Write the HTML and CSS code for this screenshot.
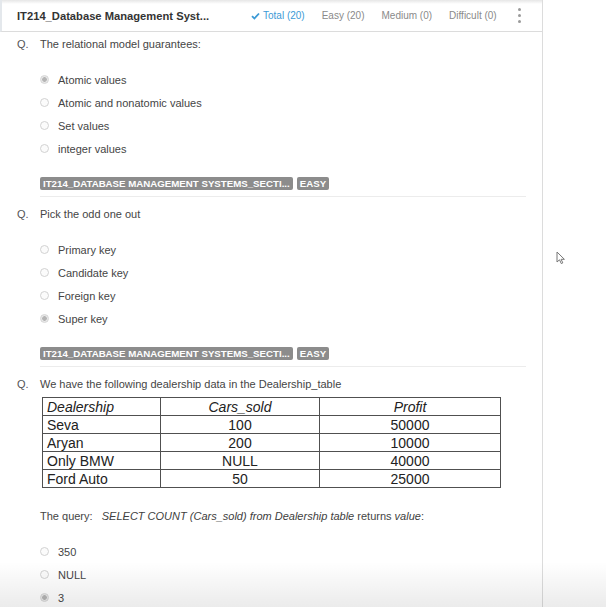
FILE: index.html
```html
<!DOCTYPE html>
<html>
<head>
<meta charset="utf-8">
<link rel="stylesheet" href="styles.css">
</head>
<body>
<div class="app">
  <div class="main">
    <header class="topbar">
      <div class="title">IT214_Database Management Syst...</div>
      <nav class="tabs">
        <span class="tab active"><svg class="check" width="9" height="8" viewBox="0 0 9 8"><polyline points="1,4.2 3.4,6.5 8,1.5" fill="none" stroke="#3b9ad6" stroke-width="1.8"/></svg>Total (20)</span>
        <span class="tab">Easy (20)</span>
        <span class="tab">Medium (0)</span>
        <span class="tab">Difficult (0)</span>
      </nav>
      <div class="kebab"><i></i><i></i><i></i></div>
    </header>

    <section class="question first">
      <div class="q-label">Q.</div>
      <div class="q-body">
        <div class="q-text">The relational model guarantees:</div>
        <ul class="options">
          <li><span class="radio checked"></span>Atomic values</li>
          <li><span class="radio"></span>Atomic and nonatomic values</li>
          <li><span class="radio"></span>Set values</li>
          <li><span class="radio"></span>integer values</li>
        </ul>
        <div class="tags"><span class="tag">IT214_DATABASE MANAGEMENT SYSTEMS_SECTI...</span><span class="tag">EASY</span></div>
      </div>
    </section>

    <section class="question">
      <div class="q-label">Q.</div>
      <div class="q-body">
        <div class="q-text">Pick the odd one out</div>
        <ul class="options">
          <li><span class="radio"></span>Primary key</li>
          <li><span class="radio"></span>Candidate key</li>
          <li><span class="radio"></span>Foreign key</li>
          <li><span class="radio checked"></span>Super key</li>
        </ul>
        <div class="tags"><span class="tag">IT214_DATABASE MANAGEMENT SYSTEMS_SECTI...</span><span class="tag">EASY</span></div>
      </div>
    </section>

    <section class="question last">
      <div class="q-label">Q.</div>
      <div class="q-body">
        <div class="q-text">We have the following dealership data in the Dealership_table</div>
        <table class="data">
          <colgroup><col class="c1"><col class="c2"><col class="c3"></colgroup>
          <tr><th class="left">Dealership</th><th>Cars_sold</th><th>Profit</th></tr>
          <tr><td class="left">Seva</td><td>100</td><td>50000</td></tr>
          <tr><td class="left">Aryan</td><td>200</td><td>10000</td></tr>
          <tr><td class="left">Only BMW</td><td>NULL</td><td>40000</td></tr>
          <tr><td class="left">Ford Auto</td><td>50</td><td>25000</td></tr>
        </table>
        <div class="query">The query:&nbsp;&nbsp; <em>SELECT COUNT (Cars_sold) from Dealership table</em> returns <em>value</em>:</div>
        <ul class="options">
          <li><span class="radio"></span>350</li>
          <li><span class="radio"></span>NULL</li>
          <li><span class="radio checked"></span>3</li>
        </ul>
      </div>
    </section>
  </div>
  <div class="side"></div>
</div>
<svg class="cursor" width="10" height="14" viewBox="0 0 10 14"><path d="M1 1 L1 11 L3.5 8.8 L5.3 12.6 L6.8 11.9 L5.1 8.3 L8.4 8.3 Z" fill="#fff" stroke="#777" stroke-width="1" stroke-linejoin="round"/></svg>
<div class="fade"></div>
</body>
</html>
```

FILE: styles.css
```css
* { box-sizing: border-box; }
html, body { margin: 0; padding: 0; }
body {
  width: 606px;
  height: 607px;
  overflow: hidden;
  background: #fff;
  font-family: "Liberation Sans", Arial, sans-serif;
  color: #454545;
  position: relative;
}
.app { display: flex; height: 607px; }
.main {
  width: 543px;
  border-right: 1px solid #dcdcdc;
  height: 607px;
}
.side { flex: 1; }

.topbar {
  height: 32px;
  border-bottom: 1px solid #dcdcdc;
  display: flex;
  align-items: center;
  padding-left: 15px;
  background: linear-gradient(#e6e6e6 0, #fff 4px);
  border-left: 2px solid #e4e8ec;
}
.title {
  width: 234px;
  font-size: 11.2px;
  font-weight: bold;
  color: #333;
}
.tabs { display: flex; gap: 17px; font-size: 10px; color: #8a8a8a; }
.tab { display: flex; align-items: center; white-space: nowrap; }
.tab.active { color: #3b9ad6; }
.check { margin-right: 3px; }
.kebab {
  margin-left: 21px;
  display: flex;
  flex-direction: column;
  gap: 3px;
}
.kebab i { width: 3px; height: 3px; border-radius: 50%; background: #9a9a9a; display: block; }

.question { display: flex; padding-top: 6px; padding-right: 16px; }
.question.first { padding-top: 1px; }
.q-label { width: 23px; padding-left: 17px; box-sizing: content-box; font-size: 11px; line-height: 23px; color: #555; }
.q-body { flex: 1; border-bottom: 1px solid #ececec; padding-bottom: 6px; }
.question.last .q-body { border-bottom: 0; }
.q-text { font-size: 11px; line-height: 23px; color: #454545; }

.options { list-style: none; margin: 12px 0 0; padding: 0; }
.options li {
  display: flex;
  align-items: center;
  height: 23px;
  font-size: 11px;
  color: #454545;
}
.radio {
  width: 9px; height: 9px;
  border-radius: 50%;
  border: 1px solid #d2d2d2;
  background: #fbfbfb;
  margin-right: 9px;
  flex: none;
}
.radio.checked {
  border-color: #d6d6d6;
  background: radial-gradient(circle, #b5b5b5 0 2px, #e9e9e9 2.6px);
}

.tags { display: flex; gap: 4px; margin-top: 17px; }
.tag {
  height: 13px;
  line-height: 13px;
  padding: 0 3px;
  background: #8c8c8c;
  color: #fff;
  font-size: 9.7px;
  font-weight: bold;
  border-radius: 2px;
  white-space: nowrap;
}

.data {
  margin-top: 1px;
  margin-left: 2px;
  border-collapse: collapse;
  width: 458px;
  table-layout: fixed;
  font-size: 14px;
  color: #222;
}
.data .c1 { width: 118px; }
.data .c2 { width: 159px; }
.data .c3 { width: 181px; }
.data th, .data td {
  border: 1px solid #505050;
  height: 18px;
  padding: 0 4px;
  line-height: 16px;
  text-align: center;
  font-weight: normal;
}
.data th { font-style: italic; }
.data .left { text-align: left; }

.query { margin-top: 17px; font-size: 11px; line-height: 23px; color: #454545; }
.query em { color: #404040; }

.cursor { position: absolute; left: 556px; top: 251px; }
.fade {
  position: absolute;
  left: 0; right: 0; bottom: 0;
  height: 45px;
  background: linear-gradient(rgba(0,0,0,0), rgba(0,0,0,0.08));
  pointer-events: none;
}
```
